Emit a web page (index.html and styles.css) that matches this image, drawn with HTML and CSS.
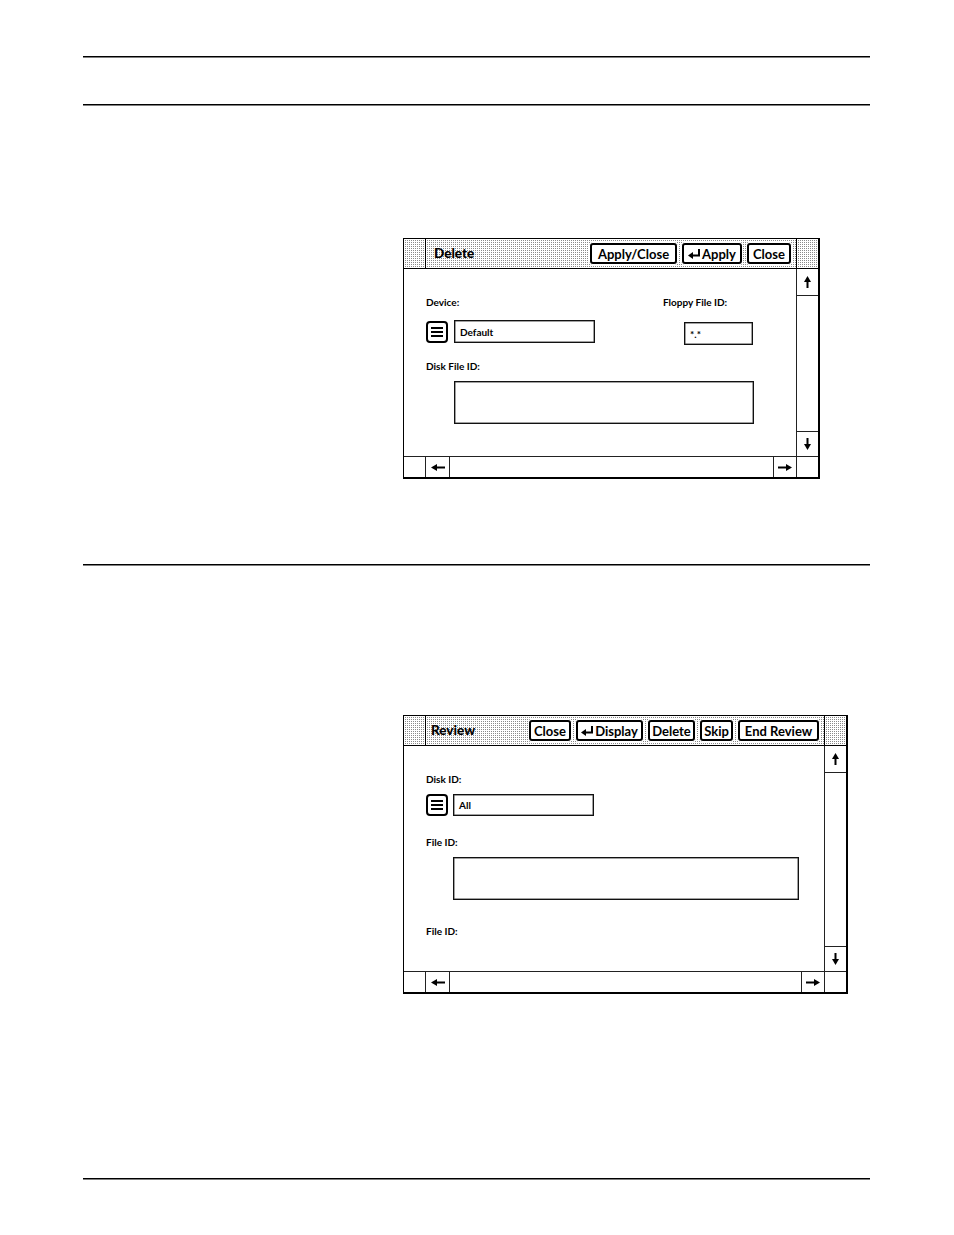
FILE: index.html
```html
<!DOCTYPE html>
<html>
<head>
<meta charset="utf-8">
<link rel="stylesheet" href="styles.css">
</head>
<body>
<div class="page">
  <div class="rule r1"></div>
  <div class="rule r2"></div>

  <div class="win w1">
    <div class="tbar">
      <div class="lbox"></div>
      <div class="ttl">Delete</div>
      <div class="btns">
        <div class="btn bw87">Apply/Close</div>
        <div class="btn bw60"><svg class="ret" width="13" height="10" viewBox="0 0 13 10"><path d="M11 0 V6.5 H4" fill="none" stroke="#000" stroke-width="2"/><path d="M0 6.5 L5 3 L5 10 Z" fill="#000"/></svg>Apply</div>
        <div class="btn bw44">Close</div>
      </div>
    </div>
    <div class="tcorner"></div>
    <div class="body">
      <div class="row1">
        <div class="grp g-dev">
          <div class="lbl">Device:</div>
          <div class="frow">
            <svg class="menu" width="22" height="22" viewBox="0 0 22 22"><rect x="1" y="1" width="20" height="20" rx="3" fill="#fff" stroke="#000" stroke-width="2"/><rect x="5" y="6" width="12" height="2" fill="#000"/><rect x="5" y="10" width="12" height="2" fill="#000"/><rect x="5" y="14" width="12" height="2" fill="#000"/></svg>
            <div class="fld f-dev">Default</div>
          </div>
        </div>
        <div class="grp">
          <div class="lbl">Floppy File ID:</div>
          <div class="fld f-floppy">*.*</div>
        </div>
      </div>
      <div class="lbl l-disk">Disk File ID:</div>
      <div class="fld big b1"></div>
    </div>
    <div class="vscroll">
      <div class="up"><svg width="7" height="12" viewBox="0 0 7 12"><path d="M3.5 0 L7 6 L0 6 Z" fill="#000"/><rect x="2.5" y="5" width="2" height="7" fill="#000"/></svg></div>
      <div class="vtrack"></div>
      <div class="down"><svg width="7" height="12" viewBox="0 0 7 12"><path d="M3.5 12 L7 6 L0 6 Z" fill="#000"/><rect x="2.5" y="0" width="2" height="7" fill="#000"/></svg></div>
    </div>
    <div class="hscroll">
      <div class="lb"></div>
      <div class="la"><svg width="14" height="7" viewBox="0 0 14 7"><path d="M0 3.5 L6 0 L6 7 Z" fill="#000"/><rect x="5" y="2.5" width="9" height="2" fill="#000"/></svg></div>
      <div class="htrack"></div>
      <div class="ra"><svg width="14" height="7" viewBox="0 0 14 7"><path d="M14 3.5 L8 0 L8 7 Z" fill="#000"/><rect x="0" y="2.5" width="9" height="2" fill="#000"/></svg></div>
    </div>
    <div class="bcorner"></div>
  </div>

  <div class="rule r3"></div>

  <div class="win w2">
    <div class="tbar">
      <div class="lbox"></div>
      <div class="ttl t2">Review</div>
      <div class="btns">
        <div class="btn bw42">Close</div>
        <div class="btn bw67"><svg class="ret" width="13" height="10" viewBox="0 0 13 10"><path d="M11 0 V6.5 H4" fill="none" stroke="#000" stroke-width="2"/><path d="M0 6.5 L5 3 L5 10 Z" fill="#000"/></svg>Display</div>
        <div class="btn bw47">Delete</div>
        <div class="btn bw33">Skip</div>
        <div class="btn bw81">End Review</div>
      </div>
    </div>
    <div class="tcorner"></div>
    <div class="body">
      <div class="lbl">Disk ID:</div>
      <div class="frow">
        <svg class="menu" width="22" height="22" viewBox="0 0 22 22"><rect x="1" y="1" width="20" height="20" rx="3" fill="#fff" stroke="#000" stroke-width="2"/><rect x="5" y="6" width="12" height="2" fill="#000"/><rect x="5" y="10" width="12" height="2" fill="#000"/><rect x="5" y="14" width="12" height="2" fill="#000"/></svg>
        <div class="fld f-dev f-all">All</div>
      </div>
      <div class="lbl l-file">File ID:</div>
      <div class="fld big b2"></div>
      <div class="lbl l-file2">File ID:</div>
    </div>
    <div class="vscroll">
      <div class="up"><svg width="7" height="12" viewBox="0 0 7 12"><path d="M3.5 0 L7 6 L0 6 Z" fill="#000"/><rect x="2.5" y="5" width="2" height="7" fill="#000"/></svg></div>
      <div class="vtrack"></div>
      <div class="down"><svg width="7" height="12" viewBox="0 0 7 12"><path d="M3.5 12 L7 6 L0 6 Z" fill="#000"/><rect x="2.5" y="0" width="2" height="7" fill="#000"/></svg></div>
    </div>
    <div class="hscroll">
      <div class="lb"></div>
      <div class="la"><svg width="14" height="7" viewBox="0 0 14 7"><path d="M0 3.5 L6 0 L6 7 Z" fill="#000"/><rect x="5" y="2.5" width="9" height="2" fill="#000"/></svg></div>
      <div class="htrack"></div>
      <div class="ra"><svg width="14" height="7" viewBox="0 0 14 7"><path d="M14 3.5 L8 0 L8 7 Z" fill="#000"/><rect x="0" y="2.5" width="9" height="2" fill="#000"/></svg></div>
    </div>
    <div class="bcorner"></div>
  </div>

  <div class="rule r4"></div>
</div>
</body>
</html>
```

FILE: styles.css
```css
body {
  margin: 0;
  background: #fff;
  color: #000;
  font-family: Lato, "Open Sans", "DejaVu Sans", sans-serif;
}
.page {
  margin-left: 83px;
  width: 787px;
  padding-bottom: 55px;
}
.rule {
  height: 1px;
  background: #000;
  box-shadow: 0 0.5px 0 #000;
}
.r1 { margin-top: 56px; }
.r2 { margin-top: 47px; }
.r3 { margin-top: 85px; }
.r4 { margin-top: 184px; }

.win {
  margin-left: 320px;
  border: 1px solid #000;
  border-right-width: 2px;
  border-bottom-width: 2px;
  display: grid;
  grid-template-columns: 1fr 22px;
  grid-template-rows: 30px 1fr 21px;
  background: #fff;
}
.w1 { width: 414px; height: 238px; margin-top: 133px; }
.w2 { width: 442px; height: 276px; margin-top: 150px; }

.tbar,
.tcorner {
  background-color: #8a8a8a;
  background-image:
    linear-gradient(90deg, #fff 1px, transparent 1px),
    linear-gradient(#fff 1px, transparent 1px);
  background-size: 2px 2px;
  border-bottom: 1px solid #000;
}
.tbar {
  display: flex;
  align-items: center;
}
.tcorner { border-left: 1px solid #000; }
.lbox {
  width: 21px;
  align-self: stretch;
  border-right: 1px solid #000;
}
.ttl {
  flex: 1;
  margin-left: 8px;
  font-weight: 900;
  font-size: 13.5px;
  margin-top: -2px;
}
.t2 { margin-left: 5px; }
.btns {
  display: flex;
  gap: 5px;
  margin-right: 5px;
}
.btn {
  box-sizing: border-box;
  height: 21px;
  border: 2px solid #000;
  border-radius: 3px;
  background: #fff;
  box-shadow: 0 0 0 1px #fff;
  font-weight: 700;
  font-size: 13px;
  padding: 0;
  display: flex;
  align-items: center;
  justify-content: center;
  white-space: nowrap;
}
.bw87 { width: 87px; }
.bw60 { width: 60px; }
.bw44 { width: 44px; }
.bw42 { width: 42px; }
.bw67 { width: 67px; }
.bw47 { width: 47px; }
.bw33 { width: 33px; }
.bw81 { width: 81px; }
.ret { margin-right: 1px; flex: none; }

.body {
  padding: 27px 0 0 22px;
}
.lbl {
  font-size: 10px;
  font-weight: 700;
  line-height: 12px;
}
.row1 { display: flex; }
.g-dev { width: 237px; }
.frow {
  display: flex;
  align-items: center;
}
.g-dev .frow { margin-top: 12px; }
.menu { display: block; }
.fld {
  box-sizing: border-box;
  border: 1px solid #111;
  box-shadow: inset 0 0 0 0.5px #444;
  background: #fff;
  font-size: 10px;
  font-weight: 700;
  display: flex;
  align-items: center;
  padding-left: 5px;
}
.f-dev {
  margin-left: 6px;
  width: 141px;
  height: 23px;
}
.f-floppy {
  margin-left: 21px;
  margin-top: 14px;
  width: 69px;
  height: 23px;
}
.f-all { margin-left: 5px; height: 22px; }
.l-disk { margin-top: 15px; }
.big { height: 43px; margin-left: 28px; margin-top: 9px; }
.b1 { width: 300px; }
.w2 .frow { margin-top: 9px; }
.l-file { margin-top: 20px; }
.b2 { width: 346px; margin-left: 27px; }
.l-file2 { margin-top: 25px; }

.vscroll {
  border-left: 1px solid #222;
  display: flex;
  flex-direction: column;
}
.up, .down {
  display: flex;
  align-items: center;
  justify-content: center;
}
.up { height: 26px; border-bottom: 1px solid #222; }
.vtrack { flex: 1; }
.down { height: 24px; border-top: 1px solid #222; }

.hscroll {
  border-top: 1px solid #222;
  display: flex;
}
.lb { width: 21px; border-right: 1px solid #222; }
.la, .ra {
  display: flex;
  align-items: center;
  justify-content: center;
}
.la { width: 23px; border-right: 1px solid #222; }
.htrack { flex: 1; }
.ra { width: 22px; border-left: 1px solid #222; }
.bcorner {
  border-top: 1px solid #222;
  border-left: 1px solid #222;
}
```
